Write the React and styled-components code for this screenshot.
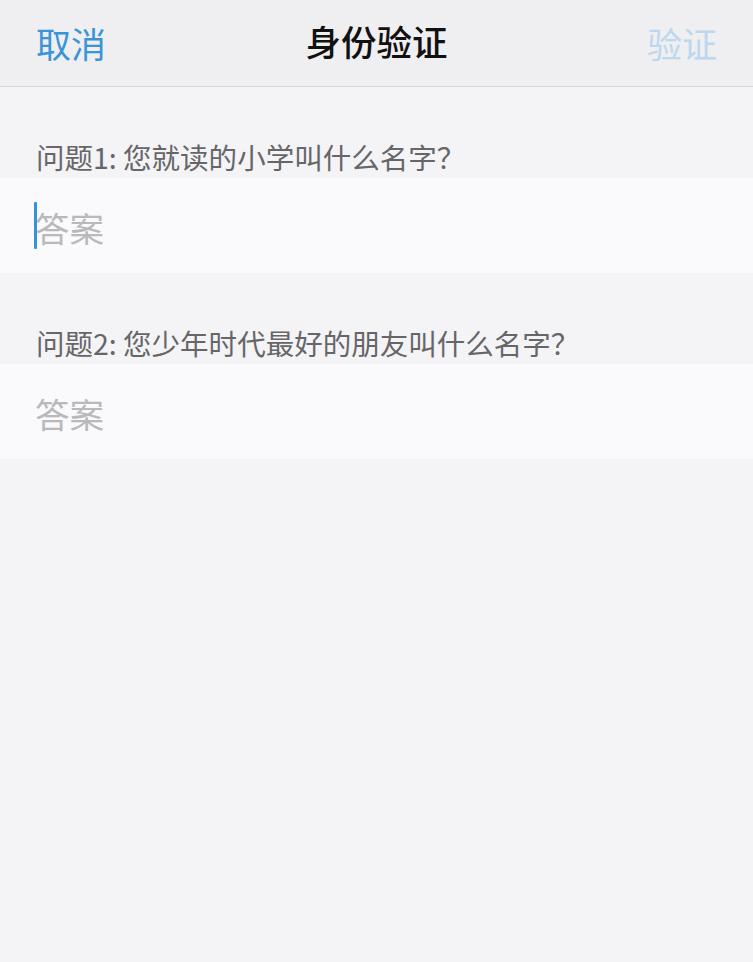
import React from "react";
import styled, { createGlobalStyle } from "styled-components";

const GlobalStyle = createGlobalStyle`
  * { box-sizing: border-box; }
  html, body {
    margin: 0;
    padding: 0;
    background: #f4f3f6;
    font-family: "Noto Sans CJK SC", "Noto Sans", sans-serif;
  }
`;

const Page = styled.div`
  width: 753px;
  min-height: 962px;
  background: #f4f3f6;
`;

const NavBar = styled.header`
  height: 87px;
  display: grid;
  grid-template-columns: 1fr auto 1fr;
  align-items: center;
  padding: 0 36px;
  background: #efeef1;
  border-bottom: 1px solid #d6d5d8;
`;

const NavButton = styled.button`
  all: unset;
  justify-self: ${(p) => (p.$right ? "end" : "start")};
  font-size: 35px;
  line-height: 1;
  margin-top: -2px;
  color: ${(p) => (p.$disabled ? "#bcd8ee" : "#3a95d6")};
`;

const Title = styled.h1`
  margin: -4px 0 0;
  font-size: 35.5px;
  font-weight: 500;
  color: #111;
  line-height: 1;
`;

const Question = styled.p`
  margin: 0;
  height: 91px;
  padding: 0 0 4px 36px;
  display: flex;
  align-items: flex-end;
  font-size: 28.5px;
  line-height: 34px;
  color: #666668;
`;

const AnswerRow = styled.div`
  height: 95px;
  background: #faf9fc;
  display: flex;
  align-items: center;
  padding-left: 35px;
  position: relative;
`;

const Cursor = styled.span`
  position: absolute;
  left: 34px;
  top: 24px;
  width: 3px;
  height: 47px;
  border-radius: 1px;
  background: #3793d8;
`;

const Placeholder = styled.span`
  font-size: 34.5px;
  line-height: 1;
  color: #b9b9bb;
  margin-top: 3px;
`;

const questions = [
  { id: 1, text: "问题1: 您就读的小学叫什么名字？", focused: true },
  { id: 2, text: "问题2: 您少年时代最好的朋友叫什么名字？", focused: false },
];

export default function App() {
  return (
    <Page>
      <GlobalStyle />
      <NavBar>
        <NavButton>取消</NavButton>
        <Title>身份验证</Title>
        <NavButton $right $disabled>
          验证
        </NavButton>
      </NavBar>
      {questions.map((q) => (
        <section key={q.id}>
          <Question>{q.text}</Question>
          <AnswerRow>
            {q.focused && <Cursor />}
            <Placeholder>答案</Placeholder>
          </AnswerRow>
        </section>
      ))}
    </Page>
  );
}
